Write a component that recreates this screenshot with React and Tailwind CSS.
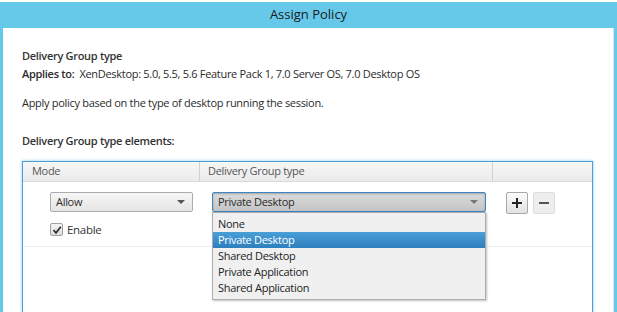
export default function App() {
  const items = ["None", "Private Desktop", "Shared Desktop", "Private Application", "Shared Application"];
  return (
    <div className="w-[617px] h-[312px] overflow-hidden bg-white flex flex-col text-[#2b2b2b] tracking-[-0.3px]" style={{ fontFamily: '"Open Sans", "Noto Sans", sans-serif' }}>
      <div className="h-[2px] bg-white shrink-0" />
      <div className="flex-1 flex flex-col bg-[#66c9ea] pl-[3px] pr-[3px] min-h-0">
        <div className="h-[26px] shrink-0 flex items-center justify-center text-[13px] text-[#1a1a1a] pb-[1px] tracking-normal">Assign Policy</div>
        <div className="flex-1 bg-white border-r border-[#d6e6ee] flex flex-col pl-[19px] pr-[20px] min-h-0">
          <div className="pt-[19px] text-[11px] font-semibold leading-[17px] text-[#333]">Delivery Group type</div>
          <div className="text-[11px] leading-[17px] mt-[1px]">
            <span className="font-semibold">Applies to:</span>
            <span className="ml-[5px]">XenDesktop: 5.0, 5.5, 5.6 Feature Pack 1, 7.0 Server OS, 7.0 Desktop OS</span>
          </div>
          <div className="text-[11px] leading-[17px] mt-[12px]">Apply policy based on the type of desktop running the session.</div>
          <div className="text-[11px] font-semibold leading-[17px] mt-[21px] text-[#333]">Delivery Group type elements:</div>
          <div className="mt-[12px] flex-1 border border-[#4b9fd5] border-b-0 shadow-[0_0_3px_#8cc9ec] relative flex flex-col min-h-0">
            <div className="h-[20px] shrink-0 flex bg-gradient-to-b from-[#f7f7f7] to-[#ebebeb] border-b border-[#d9d9d9] text-[11px] text-[#555]">
              <div className="w-[177px] border-r border-[#d0d0d0] pl-[9px] flex items-center">Mode</div>
              <div className="w-[293px] border-r border-[#d0d0d0] pl-[8px] flex items-center">Delivery Group type</div>
              <div className="flex-1" />
            </div>
            <div className="h-[65px] shrink-0 flex border-b border-[#ededed] text-[11px]">
              <div className="w-[177px] pl-[27px] pt-[10px] flex flex-col">
                <div className="w-[143px] h-[20px] border border-[#acacac] rounded-[2px] bg-gradient-to-b from-[#f6f6f6] to-[#e4e4e4] flex items-center justify-between pl-[5px] pr-[7px]">
                  <span>Allow</span>
                  <span className="w-0 h-0 border-l-[4px] border-r-[4px] border-t-[4px] border-l-transparent border-r-transparent border-t-[#555]" />
                </div>
                <div className="flex items-center mt-[9px] gap-[4px]">
                  <div className="w-[13px] h-[13px] border border-[#a0a0a0] rounded-[2px] bg-gradient-to-b from-[#f4f4f4] to-[#dedede] flex items-center justify-center">
                    <svg width="10" height="10" viewBox="0 0 10 10"><path d="M1.5 5.2 L4 7.8 L8.8 1.8" fill="none" stroke="#333" strokeWidth="1.8" /></svg>
                  </div>
                  <span className="text-[11.5px] text-[#333]">Enable</span>
                </div>
              </div>
              <div className="w-[293px] pl-[12px] pt-[10px] relative">
                <div className="w-[274px] h-[20px] border border-[#3c86c4] rounded-[2px] bg-gradient-to-b from-[#dcdcdc] to-[#c4c4c4] shadow-[inset_0_1px_2px_rgba(0,0,0,0.25)] flex items-center justify-between pl-[5px] pr-[7px]">
                  <span>Private Desktop</span>
                  <span className="w-0 h-0 border-l-[4px] border-r-[4px] border-t-[4px] border-l-transparent border-r-transparent border-t-[#777]" />
                </div>
                <div className="absolute left-[12px] top-[30px] w-[274px] bg-[#f0f0f0] border border-[#acacac] shadow-[1px_1px_2px_rgba(0,0,0,0.25)] pt-[3px] pb-[3px] z-10">
                  {items.map((it) => (
                    <div key={it} className={"h-[16px] flex items-center pl-[5px] text-[11px] " + (it === "Private Desktop" ? "bg-gradient-to-b from-[#4a9fd8] to-[#2d7fbd] text-white" : "text-[#222]")}>{it}</div>
                  ))}
                </div>
              </div>
              <div className="flex-1 pl-[13px] pt-[10px] flex gap-[5px] items-start">
                <div className="w-[22px] h-[22px] border border-[#a8a8a8] rounded-[2px] bg-gradient-to-b from-[#fbfbfb] to-[#e2e2e2] flex items-center justify-center">
                  <svg width="12" height="12" viewBox="0 0 12 12"><path d="M6 1 V11 M1 6 H11" stroke="#222" strokeWidth="2" /></svg>
                </div>
                <div className="w-[22px] h-[22px] border border-[#dcdcdc] rounded-[2px] bg-[#eeeeee] flex items-center justify-center">
                  <svg width="12" height="12" viewBox="0 0 12 12"><path d="M1 6 H11" stroke="#555" strokeWidth="2" /></svg>
                </div>
              </div>
            </div>
            <div className="flex-1" />
          </div>
        </div>
      </div>
    </div>
  );
}
